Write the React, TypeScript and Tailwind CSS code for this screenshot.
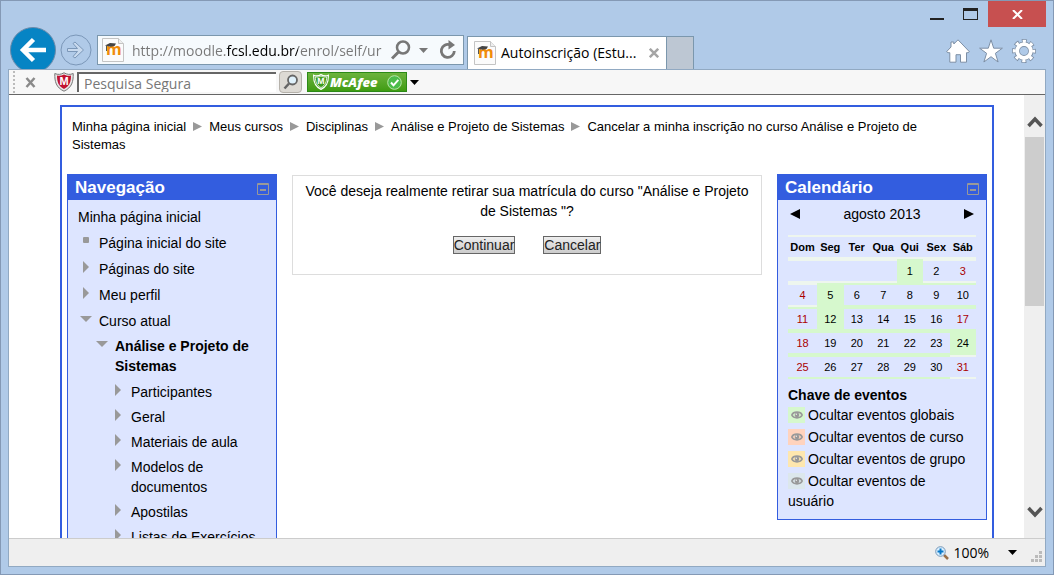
import { useState } from "react"
import clsx from "clsx"

type NavItem = {
  label: string
  state?: "open" | "closed" | "leaf"
  bold?: boolean
}

const crumbs = [
  "Minha página inicial",
  "Meus cursos",
  "Disciplinas",
  "Análise e Projeto de Sistemas",
  "Cancelar a minha inscrição no curso Análise e Projeto de Sistemas",
]

const navItems: NavItem[] = [
  { label: "Página inicial do site", state: "leaf" },
  { label: "Páginas do site", state: "closed" },
  { label: "Meu perfil", state: "closed" },
  { label: "Curso atual", state: "open" },
]

const courseItems: NavItem[] = [
  { label: "Participantes", state: "closed" },
  { label: "Geral", state: "closed" },
  { label: "Materiais de aula", state: "closed" },
  { label: "Modelos de documentos", state: "closed" },
  { label: "Apostilas", state: "closed" },
  { label: "Listas de Exercícios", state: "closed" },
]

const weekDays = ["Dom", "Seg", "Ter", "Qua", "Qui", "Sex", "Sáb"]

const weeks = [
  [0, 0, 0, 0, 1, 2, 3],
  [4, 5, 6, 7, 8, 9, 10],
  [11, 12, 13, 14, 15, 16, 17],
  [18, 19, 20, 21, 22, 23, 24],
  [25, 26, 27, 28, 29, 30, 31],
]
const eventDays = [1, 5, 12, 24]
const redDays = [3, 4, 11, 17, 18, 25, 31]
const paleDays = [0, 1, 2, 3, 4, 31]

const eventKeys = [
  { label: "Ocultar eventos globais", color: "bg-[#d6f8cd]" },
  { label: "Ocultar eventos de curso", color: "bg-[#ffd3bd]" },
  { label: "Ocultar eventos de grupo", color: "bg-[#fee7ae]" },
  { label: "Ocultar eventos de usuário", color: "bg-[#dce7ec]" },
]

const MoodleIcon = () => (
  <svg width="22" height="24" viewBox="0 0 22 24" className="shrink-0">
    <path d="M.5 .5h16l5 5v18H.5z" fill="#fbfbfb" stroke="#c4c4c4" />
    <path d="M16.500 .5v5h5" fill="#eee" stroke="#c4c4c4" />
    <text x="4" y="17" fontSize="16" fontWeight="bold" fontFamily="Open Sans, sans-serif" fill="#f08c0a">
      m
    </text>
    <path d="M3 7.500l5-2.500 6 .5-1.500 2.500-4 .8z" fill="#444" />
    <path d="M4.500 8v5" stroke="#555" />
  </svg>
)

const Eye = () => (
  <svg width="12" height="8" viewBox="0 0 12 8">
    <path d="M.8 4C2.500 .2 9.500 .2 11.200 4 9.500 7.800 2.500 7.800 .8 4z" fill="none" stroke="#999" strokeWidth="1.600" />
    <circle cx="6" cy="4" r="2.300" fill="#999" />
    <circle cx="5.300" cy="3.300" r=".7" fill="#eee" />
  </svg>
)

const Shield = ({ green }: { green?: boolean }) => (
  <svg width={green ? 16 : 20} height={green ? 16 : 20} viewBox="0 0 20 20" className="shrink-0">
    <path
      d="M.8 1.500c3.200 1.500 6.200 1 9.200-.7 3 1.700 6 2.200 9.200.7.2 8-1.200 14-9.200 17.700C2 15.500.6 9.500.8 1.500z"
      fill={green ? "#3f9c1c" : "#e8e8e8"}
      stroke={green ? "#fff" : "#777"}
      strokeWidth={green ? 1.5 : 1}
    />
    <path
      d="M3 3.500c2.500.7 4.700.2 7-1 2.300 1.200 4.500 1.700 7 1 0 6-1.200 10.500-7 13.500-5.800-3-7-7.500-7-13.500z"
      fill={green ? "#3f9c1c" : "#c1122f"}
      stroke={green ? "#fff" : "none"}
    />
    <text x="10" y="13" textAnchor="middle" fontSize="11" fontWeight="bold" fontFamily="Liberation Sans, sans-serif" fill="#fff">
      M
    </text>
  </svg>
)

const Caret = () => (
  <svg width="9" height="5" viewBox="0 0 9 5">
    <path d="M0 0h9L4.500 5z" fill="currentColor" />
  </svg>
)

const Marker = ({ state }: { state?: string }) => (
  <svg width="13" height="20" viewBox="0 0 13 20" className="shrink-0" fill="#999">
    {state === "leaf" && <rect x="3" y="4" width="6" height="6" rx="1" />}
    {state === "closed" && <path d="M3 2v12l6-6z" />}
    {state === "open" && <path d="M0 5h12l-6 6z" />}
  </svg>
)

const NavLink = ({ item }: { item: NavItem }) => (
  <a href="#" className={clsx("flex gap-[6px]", item.bold && "font-bold")}>
    <Marker state={item.state} />
    <span>{item.label}</span>
  </a>
)

const BlockHeader = ({ title }: { title: string }) => (
  <div className="flex h-[26px] items-center justify-between bg-[#335ddf] pr-2 pl-2">
    <h2 className="pt-[2px] text-[17px] leading-6 font-bold text-white">{title}</h2>
    <button aria-label={"Ocultar " + title} className="mt-1">
      <svg width="12" height="12" viewBox="0 0 12 12" fill="none" stroke="#999">
        <path d="M.5 .5h11v11H.5zM0 1.500h12" />
        <path d="M3 7h6" strokeWidth="2" />
      </svg>
    </button>
  </div>
)

const TitleBar = () => (
  <div className="flex h-[26px] shrink-0 items-start justify-end pr-[7px]">
    <button aria-label="Minimizar" className="flex h-[26px] w-[33px] items-start justify-center pt-[17px]">
      <span className="h-[2px] w-[14px] bg-[#222]" />
    </button>
    <button aria-label="Maximizar" className="flex h-[26px] w-[34px] items-start justify-center pt-[7px]">
      <span className="h-[12px] w-[15px] border border-t-3 border-[#222]" />
    </button>
    <button aria-label="Fechar" className="ml-[1px] flex h-[26px] w-[58px] items-center justify-center bg-[#c75050]">
      <svg width="11" height="9" viewBox="0 0 11 9">
        <path d="M1 0l9 9M10 0L1 9" stroke="#fff" strokeWidth="2" />
      </svg>
    </button>
  </div>
)

const AddressRow = () => {
  const [url, setUrl] = useState("http://moodle.fcsl.edu.br/enrol/self/ur")

  return (
    <div className="flex h-[42px] shrink-0 items-start overflow-hidden pl-[9px] font-['Open_Sans',sans-serif]">
      <button aria-label="Voltar" className="shrink-0">
        <svg width="46" height="46" viewBox="0 0 46 46">
          <circle cx="23" cy="23" r="22.500" fill="#0684c4" stroke="#6c8bab" />
          <path d="M13 23h23M23.500 12.500L13 23l10.500 10.500" fill="none" stroke="#fff" strokeWidth="4.500" />
        </svg>
      </button>
      <button aria-label="Avançar" className="mt-[7px] ml-[4px] shrink-0">
        <svg width="32" height="32" viewBox="0 0 32 32">
          <circle cx="16" cy="16" r="15" fill="none" stroke="#7b97b8" />
          <path d="M7.500 14.500h10l-4.500-5 2-1.500 8.500 8-8.500 8-2-1.500 4.500-5h-10z" fill="#c9daee" stroke="#7b97b8" />
        </svg>
      </button>
      <div className="mt-[8px] ml-[5px] flex h-[30px] min-w-0 flex-[0_1_367px] items-center border border-[#7b97ad] bg-[#f6fafd] pr-[6px] pl-1">
        <MoodleIcon />
        <input
          aria-label="Endereço"
          value={url}
          onChange={(e) => setUrl(e.target.value)}
          className="ml-2 h-7 min-w-0 flex-1 bg-linear-[90deg,#777_94px,#000_94px,#000_166px,#777_166px] bg-clip-text text-[14px] text-transparent outline-none"
        />
        <button aria-label="Pesquisar" className="shrink-0">
          <svg width="20" height="20" viewBox="0 0 20 20" fill="none" stroke="#777">
            <circle cx="12" cy="7.500" r="6" strokeWidth="2.500" />
            <path d="M7.500 12l-6.500 6.500" strokeWidth="3" />
          </svg>
        </button>
        <button aria-label="Histórico" className="ml-[8px] shrink-0 text-[#777]">
          <Caret />
        </button>
        <button aria-label="Atualizar" className="ml-[11px] shrink-0">
          <svg width="18" height="20" viewBox="0 0 18 20" fill="none" stroke="#777">
            <path d="M11 4.800A6.500 6.500 0 1 0 15.300 11" strokeWidth="2.800" />
            <path d="M9.500 0l6.500 5-6.500 4.500z" fill="#777" stroke="none" />
          </svg>
        </button>
      </div>
      <div className="mt-[9px] ml-[3px] flex h-[33px] w-[200px] shrink-0 items-center border border-b-0 border-[#7b97ad] bg-white pl-[6px]">
        <MoodleIcon />
        <span className="ml-[5px] flex-1 text-[14px] leading-5 whitespace-nowrap text-black">Autoinscrição (Estu...</span>
        <button aria-label="Fechar guia" className="mr-[7px]">
          <svg width="10" height="10" viewBox="0 0 10 10">
            <path d="M.8 .8l8.400 8.400M9.200 .8L.8 9.200" stroke="#a5a5a5" strokeWidth="2.500" />
          </svg>
        </button>
      </div>
      <button aria-label="Nova guia" className="mt-[9px] h-[33px] w-[27px] shrink-0 border border-b-0 border-l-0 border-[#7b97ad] bg-[#bdc7d3]" />
      <div className="mt-[12px] mr-[17px] ml-auto flex shrink-0 gap-[9px]">
        <button aria-label="Página inicial">
          <svg width="24" height="24" viewBox="0 0 24 24">
            <path d="M12 .8L7.800 5V3H5v5L.6 12.700l1.400 1h1.800v9.500H10v-7.500h4.500v7.500h6v-9.500H22l1.400-1z" fill="#fff" stroke="#7d8fa5" />
          </svg>
        </button>
        <button aria-label="Favoritos">
          <svg width="24" height="24" viewBox="0 0 24 24">
            <path d="M12 .8l2.700 8.400h8.700l-7 5.100 2.700 8.700-7.100-5.300L4.900 23l2.700-8.700-7-5.100h8.700z" fill="#fff" stroke="#7d8fa5" />
          </svg>
        </button>
        <button aria-label="Ferramentas">
          <svg width="24" height="24" viewBox="0 0 24 24" fill="none">
            <circle cx="12" cy="12" r="10" stroke="#7d8fa5" strokeWidth="4" strokeDasharray="4.850 3" strokeDashoffset="2.400" />
            <circle cx="12" cy="12" r="6.800" stroke="#7d8fa5" strokeWidth="5.500" />
            <circle cx="12" cy="12" r="9.700" stroke="#fff" strokeWidth="3" strokeDasharray="3.200 4.420" strokeDashoffset="1.600" />
            <circle cx="12" cy="12" r="6.800" stroke="#fff" strokeWidth="3.800" />
          </svg>
        </button>
      </div>
    </div>
  )
}

const McAfeeBar = () => (
  <div className="flex h-[25px] shrink-0 items-center border-b border-[#666] bg-[#f7f7f7] pl-1">
    <span className="h-[22px] border-l-2 border-dotted border-[#bbb]" />
    <button aria-label="Fechar barra" className="ml-[10px]">
      <svg width="11" height="11" viewBox="0 0 11 11">
        <path d="M1.500 1l8 9M9.500 1l-8 9" stroke="#8a8a8a" strokeWidth="2.500" />
      </svg>
    </button>
    <span className="ml-[18px]">
      <Shield />
    </span>
    <input
      aria-label="Pesquisa Segura"
      placeholder="Pesquisa Segura"
      className="ml-[3px] h-5 w-[199px] border-t-2 border-l-2 border-[#666] bg-white pl-[5px] font-['Open_Sans',sans-serif] text-[14px] outline-none placeholder:text-[#777]"
    />
    <button aria-label="Pesquisar na web" className="ml-[3px] flex h-[22px] w-[23px] items-center justify-center rounded-sm border border-[#b5b1aa] bg-[#dddad4]">
      <svg width="16" height="16" viewBox="0 0 16 16">
        <circle cx="9.500" cy="6" r="4.500" fill="#dff1fb" stroke="#666" strokeWidth="1.800" />
        <path d="M6 9.500l-4.500 5" stroke="#666" strokeWidth="2.500" />
      </svg>
    </button>
    <button className="ml-[5px] flex h-5 w-[100px] items-center border border-[#2c8a17] bg-linear-to-b from-[#6cb33c] to-[#3f9c10] pl-[5px]">
      <Shield green />
      <span className="ml-[1px] font-['Open_Sans',sans-serif] text-[13px] leading-[18px] font-extrabold text-white italic">McAfee</span>
      <svg width="15" height="15" viewBox="0 0 15 15" className="mr-[4px] ml-auto">
        <circle cx="7.500" cy="7.500" r="6.800" fill="#4cbc4a" stroke="#b8e6a8" />
        <path d="M4 7.500l2.500 2.800 4.800-5.500" fill="none" stroke="#fff" strokeWidth="2" />
      </svg>
    </button>
    <button aria-label="Opções do McAfee" className="ml-[3px] text-black">
      <Caret />
    </button>
  </div>
)

const NavigationBlock = () => (
  <aside className="w-[210px] shrink-0 border border-t-0 border-[#335ddf] bg-[#dde5ff]">
    <div className="-mx-px">
      <BlockHeader title="Navegação" />
    </div>
    <nav className="px-[10px] pt-[7px] text-[14px] leading-5">
      <a href="#">Minha página inicial</a>
      <ul className="mt-[6px] flex flex-col gap-[6px] pl-[2px]">
        {navItems.map((item) => (
          <li key={item.label}>
            <NavLink item={item} />
          </li>
        ))}
      </ul>
      <div className="mt-[5px] pl-[18px]">
        <NavLink item={{ label: "Análise e Projeto de Sistemas", state: "open", bold: true }} />
      </div>
      <ul className="mt-[6px] flex flex-col gap-[5px] pl-[34px]">
        {courseItems.map((item) => (
          <li key={item.label}>
            <NavLink item={item} />
          </li>
        ))}
      </ul>
    </nav>
  </aside>
)

const CalendarBlock = () => (
  <aside className="w-[210px] shrink-0 border border-t-0 border-[#335ddf] bg-[#dde5ff]">
    <div className="-mx-px">
      <BlockHeader title="Calendário" />
    </div>
    <div className="px-[10px] pt-1 pb-2 text-[14px] leading-5">
      <div className="flex items-center justify-between px-[2px]">
        <button aria-label="Mês anterior">
          <svg width="10" height="10" viewBox="0 0 10 10">
            <path d="M10 0v10L0 5z" />
          </svg>
        </button>
        <a href="#">agosto 2013</a>
        <button aria-label="Próximo mês">
          <svg width="10" height="10" viewBox="0 0 10 10">
            <path d="M0 0v10l10-5z" />
          </svg>
        </button>
      </div>
      <table className="mt-[11px] w-full table-fixed border-separate border-spacing-0 text-center text-[11px] leading-5">
        <thead>
          <tr>
            {weekDays.map((day) => (
              <th key={day} className="border-y-2 border-[#eef6ee] p-0 first:w-[29px]">
                {day}
              </th>
            ))}
          </tr>
        </thead>
        <tbody>
          {weeks.map((week, index) => (
            <tr key={index}>
              {week.map((day, i) => (
                <td
                  key={i}
                  className={clsx(
                    "h-6 border-y-2 p-0",
                    eventDays.includes(day) && "border-[#d6f8cd] bg-[#d6f8cd]",
                    !eventDays.includes(day) && (paleDays.includes(day) ? "border-[#eef6ee]" : "border-[#d6f8cd]"),
                    redDays.includes(day) && "text-[#a00]"
                  )}
                >
                  {day || ""}
                </td>
              ))}
            </tr>
          ))}
        </tbody>
      </table>
      <h3 className="mt-[6px] font-bold">Chave de eventos</h3>
      <ul className="flex flex-col gap-[2px] pr-2">
        {eventKeys.map((key) => (
          <li key={key.label}>
            <a href="#">
              <span className={clsx("mr-[3px] inline-flex h-4 w-[17px] items-center justify-center align-text-bottom", key.color)}>
                <Eye />
              </span>
              {key.label}
            </a>
          </li>
        ))}
      </ul>
    </div>
  </aside>
)

const MoodlePage = () => (
  <div className="mt-[10px] mr-[30px] ml-[51px] border-2 border-b-0 border-[#335ddf] px-[5px] pt-[11px] text-black">
    <nav className="pr-10 pl-[5px] text-[13px] leading-[18px]">
      {crumbs.map((crumb, i) => (
        <span key={crumb}>
          {i > 0 && (
            <svg width="9" height="10" viewBox="0 0 9 10" className="mx-[7px] inline-block align-baseline" fill="#999">
              <path d="M0 1v9l9-4.500z" />
            </svg>
          )}
          <a href="#">{crumb}</a>
        </span>
      ))}
    </nav>
    <div className="mt-5 flex items-start gap-[15px]">
      <NavigationBlock />
      <main className="mt-px min-w-0 flex-1 border border-[#ddd] px-[10px] pt-[5px] pb-5 text-center text-[14px] leading-5">
        <p>Você deseja realmente retirar sua matrícula do curso "Análise e Projeto de Sistemas "?</p>
        <div className="mt-[15px] flex justify-center gap-7">
          <button className="border border-[#666] bg-linear-to-b from-[#eee] to-[#ccc] leading-4 text-[#222]">Continuar</button>
          <button className="border border-[#666] bg-linear-to-b from-[#eee] to-[#ccc] leading-4 text-[#222]">Cancelar</button>
        </div>
      </main>
      <CalendarBlock />
    </div>
  </div>
)

const ScrollBar = () => (
  <div className="flex w-[21px] shrink-0 flex-col items-center bg-[#efefef]">
    <button aria-label="Rolar para cima" className="flex h-[42px] items-center pt-[11px]">
      <svg width="16" height="12" viewBox="0 0 16 12">
        <path d="M1.500 10L8 3l6.500 7" fill="none" stroke="#555" strokeWidth="3.500" />
      </svg>
    </button>
    <div className="h-[169px] w-[19px] bg-[#cdcdcd]" />
    <button aria-label="Rolar para baixo" className="mt-auto flex h-[42px] items-center pb-[11px]">
      <svg width="16" height="12" viewBox="0 0 16 12">
        <path d="M1.500 2L8 9l6.500-7" fill="none" stroke="#555" strokeWidth="3.500" />
      </svg>
    </button>
  </div>
)

const StatusBar = () => (
  <footer className="flex h-[28px] shrink-0 items-center justify-end border-t border-[#ccc] bg-[#efefef] pr-[2px]">
    <button className="flex items-center gap-1 font-['Open_Sans',sans-serif] text-[14px] leading-5 text-black">
      <svg width="14" height="14" viewBox="0 0 14 14">
        <path d="M9 9l4 4" stroke="#9b7048" strokeWidth="2.500" />
        <circle cx="5.500" cy="5.500" r="4.800" fill="#d9efff" stroke="#7898b8" />
        <path d="M5.500 2.500v6M2.500 5.500h6" stroke="#0878c8" strokeWidth="2" />
      </svg>
      100%
    </button>
    <button aria-label="Alterar nível de zoom" className="ml-[19px] text-black">
      <Caret />
    </button>
    <svg width="12" height="12" viewBox="0 0 12 12" className="mt-auto mb-[3px] ml-[14px]" fill="#bbb">
      <path d="M8 0h3v3H8zM4 4h3v3H4zM8 4h3v3H8zM0 8h3v3H0zM4 8h3v3H4zM8 8h3v3H8z" />
    </svg>
  </footer>
)

export default function App() {
  return (
    <div className="flex h-screen flex-col border border-[#8499b5] bg-[#b0cae8] font-['Liberation_Sans',Arial,sans-serif]">
      <TitleBar />
      <AddressRow />
      <div className="mx-[7px] mb-[7px] flex min-h-0 flex-1 flex-col border border-[#91a9c2] bg-white">
        <McAfeeBar />
        <div className="flex min-h-0 flex-1">
          <div className="min-w-0 flex-1 overflow-hidden">
            <MoodlePage />
          </div>
          <ScrollBar />
        </div>
        <StatusBar />
      </div>
    </div>
  )
}
